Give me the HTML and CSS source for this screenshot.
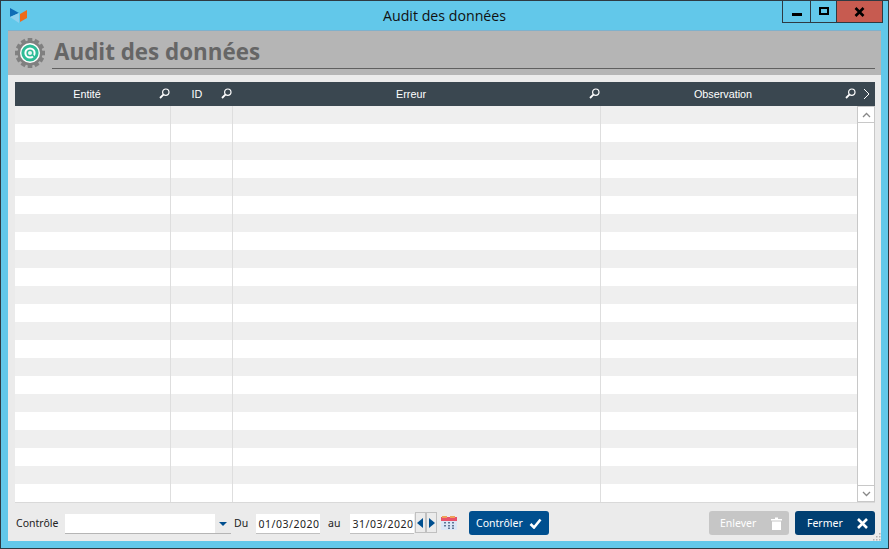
FILE: index.html
```html
<!DOCTYPE html>
<html lang="fr">
<head>
<meta charset="utf-8">
<title>Audit des données</title>
<link rel="stylesheet" href="styles.css">
</head>
<body>
<div class="window">
  <div class="titlebar">
    <svg class="logo" width="18" height="16" viewBox="0 0 18 16">
      <path d="M0 1 L9 6 L0 10Z" fill="#0f6cb5"/>
      <path d="M0 10 L9 6 L9 16Z" fill="#8fd0ee"/>
      <path d="M10 7 L17 3 L17 11 L10 15Z" fill="#ee6a1a"/>
    </svg>
    <div class="title">Audit des données</div>
    <div class="winbtns">
      <div class="wb wb-min"><span class="min-bar"></span></div>
      <div class="wb wb-max"><span class="max-box"></span></div>
      <div class="wb wb-close">
        <svg width="11" height="10" viewBox="0 0 11 10"><path d="M1.5 1 L9.5 9 M9.5 1 L1.5 9" stroke="#000" stroke-width="2.6" fill="none"/></svg>
      </div>
    </div>
  </div>
  <div class="client">
    <div class="header">
      <svg class="gear" width="32" height="32" viewBox="0 0 32 32">
        <g fill="#808080">
          <circle cx="16" cy="16" r="12.5"/>
          <rect x="13.7" y="1" width="4.6" height="30"/>
          <rect x="13.7" y="1" width="4.6" height="30" transform="rotate(30 16 16)"/>
          <rect x="13.7" y="1" width="4.6" height="30" transform="rotate(60 16 16)"/>
          <rect x="13.7" y="1" width="4.6" height="30" transform="rotate(90 16 16)"/>
          <rect x="13.7" y="1" width="4.6" height="30" transform="rotate(120 16 16)"/>
          <rect x="13.7" y="1" width="4.6" height="30" transform="rotate(150 16 16)"/>
        </g>
        <circle cx="16" cy="16" r="10" fill="#fff"/>
        <circle cx="16" cy="16" r="8.6" fill="#2fbc97"/>
        <circle cx="16" cy="16" r="5.6" fill="#fff"/>
        <circle cx="16" cy="16" r="3.6" fill="#2fbc97"/>
        <circle cx="16" cy="16" r="2" fill="#e9f7f3"/>
        <path d="M18.5 18 L21 20.5" fill="none" stroke="#2fbc97" stroke-width="1.6"/>
      </svg>
      <div class="heading">Audit des données</div>
    </div>
    <div class="body">
      <div class="grid">
        <div class="grid-head">
          <div class="hc c1"><span class="hl">Entité</span><svg class="mag" width="11" height="11" viewBox="0 0 11 11"><circle cx="6.8" cy="4.2" r="3.2" fill="none" stroke="#fff" stroke-width="1.2"/><path d="M4.4 6.6 L1 10" stroke="#fff" stroke-width="1.8"/></svg></div>
          <div class="hc c2"><span class="hl">ID</span><svg class="mag" width="11" height="11" viewBox="0 0 11 11"><circle cx="6.8" cy="4.2" r="3.2" fill="none" stroke="#fff" stroke-width="1.2"/><path d="M4.4 6.6 L1 10" stroke="#fff" stroke-width="1.8"/></svg></div>
          <div class="hc c3"><span class="hl">Erreur</span><svg class="mag" width="11" height="11" viewBox="0 0 11 11"><circle cx="6.8" cy="4.2" r="3.2" fill="none" stroke="#fff" stroke-width="1.2"/><path d="M4.4 6.6 L1 10" stroke="#fff" stroke-width="1.8"/></svg></div>
          <div class="hc c4"><span class="hl">Observation</span><svg class="mag" width="11" height="11" viewBox="0 0 11 11"><circle cx="6.8" cy="4.2" r="3.2" fill="none" stroke="#fff" stroke-width="1.2"/><path d="M4.4 6.6 L1 10" stroke="#fff" stroke-width="1.8"/></svg></div>
          <div class="hc c5"><svg width="7" height="12" viewBox="0 0 7 12"><path d="M1 1 L6 6 L1 11" fill="none" stroke="#fff" stroke-width="1"/></svg></div>
        </div>
        <div class="grid-body">
          <div class="rows">
            <div class="row"><i class="c1"></i><i class="c2"></i><i class="c3"></i><i class="c4"></i></div>
            <div class="row"><i class="c1"></i><i class="c2"></i><i class="c3"></i><i class="c4"></i></div>
            <div class="row"><i class="c1"></i><i class="c2"></i><i class="c3"></i><i class="c4"></i></div>
            <div class="row"><i class="c1"></i><i class="c2"></i><i class="c3"></i><i class="c4"></i></div>
            <div class="row"><i class="c1"></i><i class="c2"></i><i class="c3"></i><i class="c4"></i></div>
            <div class="row"><i class="c1"></i><i class="c2"></i><i class="c3"></i><i class="c4"></i></div>
            <div class="row"><i class="c1"></i><i class="c2"></i><i class="c3"></i><i class="c4"></i></div>
            <div class="row"><i class="c1"></i><i class="c2"></i><i class="c3"></i><i class="c4"></i></div>
            <div class="row"><i class="c1"></i><i class="c2"></i><i class="c3"></i><i class="c4"></i></div>
            <div class="row"><i class="c1"></i><i class="c2"></i><i class="c3"></i><i class="c4"></i></div>
            <div class="row"><i class="c1"></i><i class="c2"></i><i class="c3"></i><i class="c4"></i></div>
            <div class="row"><i class="c1"></i><i class="c2"></i><i class="c3"></i><i class="c4"></i></div>
            <div class="row"><i class="c1"></i><i class="c2"></i><i class="c3"></i><i class="c4"></i></div>
            <div class="row"><i class="c1"></i><i class="c2"></i><i class="c3"></i><i class="c4"></i></div>
            <div class="row"><i class="c1"></i><i class="c2"></i><i class="c3"></i><i class="c4"></i></div>
            <div class="row"><i class="c1"></i><i class="c2"></i><i class="c3"></i><i class="c4"></i></div>
            <div class="row"><i class="c1"></i><i class="c2"></i><i class="c3"></i><i class="c4"></i></div>
            <div class="row"><i class="c1"></i><i class="c2"></i><i class="c3"></i><i class="c4"></i></div>
            <div class="row"><i class="c1"></i><i class="c2"></i><i class="c3"></i><i class="c4"></i></div>
            <div class="row"><i class="c1"></i><i class="c2"></i><i class="c3"></i><i class="c4"></i></div>
            <div class="row"><i class="c1"></i><i class="c2"></i><i class="c3"></i><i class="c4"></i></div>
            <div class="row"><i class="c1"></i><i class="c2"></i><i class="c3"></i><i class="c4"></i></div>
          </div>
          <div class="vscroll">
            <div class="sb"><svg width="9" height="6" viewBox="0 0 9 6"><path d="M1 5 L4.5 1.5 L8 5" fill="none" stroke="#888" stroke-width="1.3"/></svg></div>
            <div class="track"></div>
            <div class="sb"><svg width="9" height="6" viewBox="0 0 9 6"><path d="M1 1 L4.5 4.5 L8 1" fill="none" stroke="#888" stroke-width="1.3"/></svg></div>
          </div>
        </div>
      </div>
      <div class="footer">
        <span class="lbl lbl-ctrl">Contrôle</span>
        <div class="combo"><div class="combo-input"></div><div class="combo-arrow"><svg width="8" height="4" viewBox="0 0 8 4"><path d="M0 0 H8 L4 4Z" fill="#004f8f"/></svg></div></div>
        <span class="lbl lbl-du">Du</span>
        <div class="date">01/03/2020</div>
        <span class="lbl lbl-au">au</span>
        <div class="date">31/03/2020</div>
        <div class="spin">
          <div class="spin-b"><svg width="7" height="10" viewBox="0 0 7 10"><path d="M6 0 V10 L0 5Z" fill="#004f8f"/></svg></div>
          <div class="spin-b"><svg width="7" height="10" viewBox="0 0 7 10"><path d="M1 0 V10 L7 5Z" fill="#004f8f"/></svg></div>
        </div>
        <svg class="cal" width="16" height="14" viewBox="0 0 16 14">
          <rect x="0" y="4" width="16" height="10" fill="#dbe6f6"/>
          <rect x="0" y="1" width="16" height="4" fill="#e8526a"/>
          <rect x="1" y="0" width="5" height="2" fill="#eea25a"/>
          <rect x="9" y="0" width="5" height="2" fill="#eea25a"/>
          <g fill="#5f7696"><rect x="3" y="6" width="2" height="1.5"/><rect x="7" y="6" width="2" height="1.5"/><rect x="11" y="6" width="2" height="1.5"/><rect x="3" y="9" width="2" height="1.5"/><rect x="7" y="9" width="2" height="1.5"/><rect x="11" y="9" width="2" height="1.5"/><rect x="7" y="11.5" width="2" height="1.5"/><rect x="11" y="11.5" width="2" height="1.5"/></g>
        </svg>
        <button class="btn btn-ctrl" type="button"><span>Contrôler</span><svg width="13" height="11" viewBox="0 0 13 11"><path d="M1.5 6 L5 9.5 L11.5 1.5" fill="none" stroke="#fff" stroke-width="2.6"/></svg></button>
        <div class="spacer"></div>
        <button class="btn btn-off" type="button"><span>Enlever</span><svg width="11" height="13" viewBox="0 0 11 13"><path d="M0 2 H4 V0.5 H7 V2 H11 V3.5 H0Z M1 4.5 H10 V13 H1Z" fill="#fff"/></svg></button>
        <button class="btn btn-close" type="button"><span>Fermer</span><svg width="11" height="11" viewBox="0 0 11 11"><path d="M1 1 L10 10 M10 1 L1 10" stroke="#fff" stroke-width="2.6" fill="none"/></svg></button>
      </div>
    </div>
    <svg class="grip" width="8" height="8" viewBox="0 0 8 8"><g fill="#b0b0b0"><rect x="6" y="0" width="1.5" height="1.5"/><rect x="3" y="3" width="1.5" height="1.5"/><rect x="6" y="3" width="1.5" height="1.5"/><rect x="0" y="6" width="1.5" height="1.5"/><rect x="3" y="6" width="1.5" height="1.5"/><rect x="6" y="6" width="1.5" height="1.5"/></g></svg>
  </div>
</div>
</body>
</html>
```
FILE: styles.css
```css
* { box-sizing: border-box; }
html, body { margin: 0; padding: 0; width: 889px; height: 549px; overflow: hidden; }
body { font-family: "Liberation Sans", Arial, sans-serif; }
.window {
  width: 889px; height: 549px;
  background: #62c8ea;
  border: 1px solid #2e3a42;
  display: flex; flex-direction: column;
}
.titlebar { height: 29px; position: relative; display: flex; align-items: flex-start; flex: none; }
.logo { margin: 6px 0 0 9px; }
.title {
  position: absolute; left: 0; right: 0; top: 6px;
  text-align: center;
  font: 14.2px/18px "Open Sans", sans-serif;
  color: #111;
}
.winbtns { position: absolute; right: 5px; top: 0; display: flex; height: 22px; border: 1px solid #2e3a42; border-top: none; }
.wb { height: 21px; display: flex; align-items: center; justify-content: center; }
.wb-min { width: 28px; border-right: 1px solid #2e3a42; }
.wb-max { width: 26px; border-right: 1px solid #2e3a42; }
.wb-close { width: 45px; background: #c75b50; }
.min-bar { width: 10px; height: 3px; background: #000; margin-top: 5px; }
.max-box { width: 10px; height: 8px; border: 2px solid #000; margin-top: -2px; }
.client {
  position: relative;
  margin: 0 7px 7px 7px;
  flex: 1;
  display: flex; flex-direction: column;
  background: #ebebeb;
  border-top: 1px solid #7fb1cc;
  min-height: 0;
}
.header {
  height: 44px; flex: none;
  background: #b5b5b5;
  display: flex; align-items: flex-start;
  padding: 5px 6px 0 6px;
}
.gear { flex: none; margin-top: 1px; }
.heading {
  flex: 1; margin-left: 6px; height: 33px;
  border-bottom: 1px solid #606060;
  font: bold 22.4px/31px "Open Sans", sans-serif;
  color: #666;
  padding-left: 2px;
}
.body { flex: 1; padding: 7px 6px 0 7px; display: flex; flex-direction: column; min-height: 0; }
.grid { width: 860px; flex: none; }
.grid-head { height: 24px; background: #3a4750; display: flex; color: #fff; font-size: 10.8px; }
.hc { position: relative; display: flex; align-items: center; justify-content: center; height: 100%; }
.hl { position: relative; }
.mag { position: absolute; top: 6px; right: 1px; }
.c1 { width: 156px; }
.c2 { width: 62px; }
.c3 { width: 368px; }
.c4 { width: 256px; }
.hc.c1 .hl { left: -6px; }
.hc.c2 .hl { left: -5px; }
.hc.c3 .hl { left: -6px; }
.hc.c4 .hl { left: -6px; }
.hc.c5 { width: 18px; }
.grid-body { display: flex; height: 397px; border-bottom: 1px solid #d9d9d9; }
.rows { width: 842px; }
.row { height: 18px; display: flex; background: #fff; }
.row:nth-child(odd) { background: #efefef; }
.row i { display: block; border-right: 1px solid #dedede; height: 18px; }
.row i.c4 { border-right: none; }
.vscroll { width: 18px; display: flex; flex-direction: column; background: #fff; border: 1px solid #c8c8c8; }
.sb { height: 16px; flex: none; display: flex; align-items: center; justify-content: center; background: #fff; }
.sb:first-child { border-bottom: 1px solid #c8c8c8; }
.sb:last-child { border-top: 1px solid #c8c8c8; }
.track { flex: 1; }
.footer { display: flex; align-items: flex-start; height: 32px; padding: 8px 0 0 1px; font: 10.5px/20px "Noto Sans", sans-serif; color: #222; }
.lbl { flex: none; line-height: 24px; }
.lbl-ctrl { width: 49px; }
.lbl-du { margin-left: 3px; width: 22px; }
.lbl-au { margin-left: 8px; width: 22px; }
.combo { width: 166px; height: 20px; margin-top: 3px; display: flex; border-bottom: 1px solid #b5b5b5; flex: none; }
.combo-input { flex: 1; background: #fff; }
.combo-arrow { width: 16px; display: flex; align-items: center; justify-content: center; }
.date { width: 64px; height: 20px; margin-top: 3px; background: #fff; border-bottom: 1px solid #c0c0c0; text-align: center; letter-spacing: .5px; flex: none; line-height: 20px; padding-left: 2px; }
.spin { display: flex; flex: none; height: 21px; margin: 1px 0 0 1px; }
.spin-b { width: 11px; border: 1px solid #c0c0c0; display: flex; align-items: center; justify-content: center; }
.cal { margin: 5px 0 0 4px; flex: none; }
.btn {
  height: 24px; width: 80px; flex: none;
  border: 0; border-radius: 3px;
  font: 10.5px/24px "Noto Sans", sans-serif;
  color: #fff;
  display: flex; align-items: center; justify-content: space-between;
  padding: 0 7px 0 7px;
}
.btn-ctrl { background: #004f8f; margin-left: 12px; }
.btn-off { background: #c6c6c6; padding: 0 7px 0 11px; }
.btn-close { background: #003f72; margin-left: 6px; padding: 0 7px 0 12px; }
.spacer { flex: 1; }
.grip { position: absolute; right: 0; bottom: 0; }
```
